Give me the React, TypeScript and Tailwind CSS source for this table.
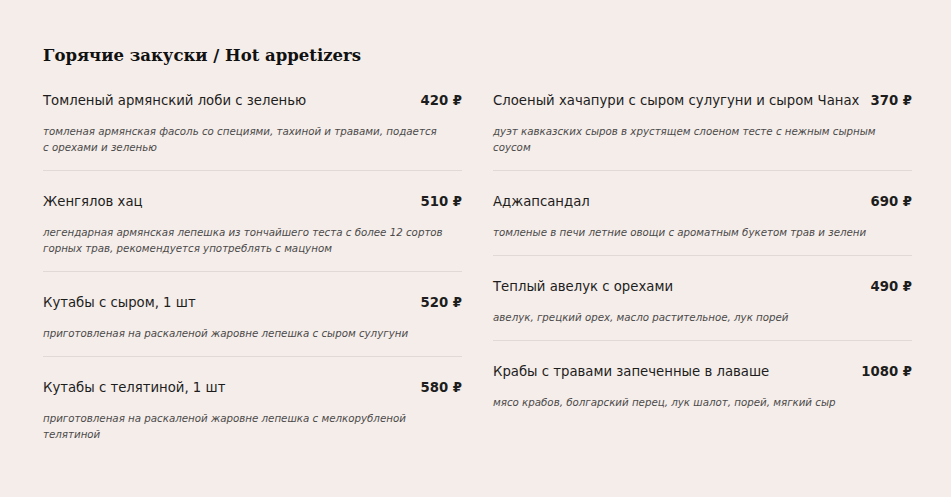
type Dish = { name: string; price: string; desc: string };

const left: Dish[] = [
  {
    name: "Томленый армянский лоби с зеленью",
    price: "420 ₽",
    desc: "томленая армянская фасоль со специями, тахиной и травами, подается с\u00a0орехами и зеленью",
  },
  {
    name: "Женгялов хац",
    price: "510 ₽",
    desc: "легендарная армянская лепешка из тончайшего теста с более 12 сортов горных трав, рекомендуется употреблять с мацуном",
  },
  {
    name: "Кутабы с сыром, 1 шт",
    price: "520 ₽",
    desc: "приготовленая на раскаленой жаровне лепешка с сыром сулугуни",
  },
  {
    name: "Кутабы с телятиной, 1 шт",
    price: "580 ₽",
    desc: "приготовленая на раскаленой жаровне лепешка с мелкорубленой телятиной",
  },
];

const right: Dish[] = [
  {
    name: "Слоеный хачапури с сыром сулугуни и сыром Чанах",
    price: "370 ₽",
    desc: "дуэт кавказских сыров в хрустящем слоеном тесте с нежным сырным соусом",
  },
  {
    name: "Аджапсандал",
    price: "690 ₽",
    desc: "томленые в печи летние овощи с ароматным букетом трав и зелени",
  },
  {
    name: "Теплый авелук с орехами",
    price: "490 ₽",
    desc: "авелук, грецкий орех, масло растительное, лук порей",
  },
  {
    name: "Крабы с травами запеченные в лаваше",
    price: "1080 ₽",
    desc: "мясо крабов, болгарский перец, лук шалот, порей, мягкий сыр",
  },
];

function Item({ dish, last }: { dish: Dish; last: boolean }) {
  return (
    <div className={`pt-[21px] pb-[15px] ${last ? "" : "border-b border-[#e0d9d5]"}`}>
      <div className="flex justify-between items-center gap-2 h-5 text-[13.25px] text-[#1d1d1d]">
        <span className="whitespace-nowrap">{dish.name}</span>
        <span className="font-bold whitespace-nowrap shrink-0">{dish.price}</span>
      </div>
      <p className="mt-3 pr-[12px] text-[10.25px] leading-4 italic text-[#4a4a4a]">{dish.desc}</p>
    </div>
  );
}

function Column({ items }: { items: Dish[] }) {
  return (
    <div className="flex flex-col">
      {items.map((d, i) => (
        <Item key={d.name} dish={d} last={i === items.length - 1} />
      ))}
    </div>
  );
}

export default function App() {
  return (
    <div className="min-h-[497px] bg-[#f5ede9] font-['DejaVu_Sans',sans-serif]">
      <div className="ml-[43px] w-[869px] pt-[43px]">
        <h2 className="h-[26px] leading-[26px] text-[16.5px] font-bold text-[#111] font-['DejaVu_Serif',serif]">
          Горячие закуски / Hot appetizers
        </h2>
        <div className="grid grid-cols-2 gap-x-[31px] mt-[1px]">
          <Column items={left} />
          <Column items={right} />
        </div>
      </div>
    </div>
  );
}
